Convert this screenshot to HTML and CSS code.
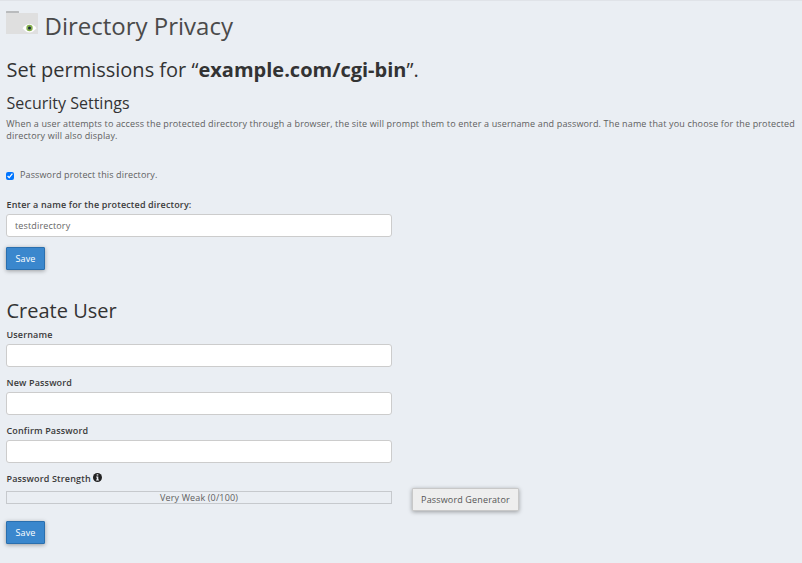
FILE: index.html
```html
<!DOCTYPE html>
<html lang="en">
	<head>
		<meta charset="UTF-8" />
		<meta name="viewport" content="initial-scale=1,width=device-width" />
		<title>Directory Privacy</title>
		<link rel="stylesheet" href="styles.css">
	</head>

	<body>
		<main class="content">
			<h1 class="page-header">
				<svg class="page-icon" width="32" height="24" viewBox="0 0 32 24">
					<path d="M0 .5a.5.5 0 0 1 .5-.5h12a.5.5 0 0 1 .5.5v3H0z" fill="#b9bbbd" />
					<path d="M0 2h31.500a.5.5 0 0 1 .5.5V23H0z" fill="#dfdfdf" />
					<path d="M16.500 17.200q7-8.400 14 0q-7 8.400-14 0z" fill="#fff" />
					<circle cx="23.500" cy="17" r="3.200" fill="#86b04f" />
					<circle cx="23.500" cy="17" r="1.500" fill="#1c2b3a" />
				</svg>
				<span class="page-title">Directory Privacy</span>
			</h1>
			<h2 class="section-title">Set permissions for “<strong>example.com/cgi-bin</strong>”.</h2>

			<form class="security-form">
				<h3 class="section-subtitle">Security Settings</h3>
				<p class="description">When a user attempts to access the protected directory through a browser, the site will prompt them to enter a username and password. The name that you choose for the protected directory will also display.</p>
				<label class="checkbox">
					<input class="checkbox-input" type="checkbox" checked />
					<span class="checkbox-text">Password protect this directory.</span>
				</label>
				<div class="form-group">
					<label class="form-label" for="name">Enter a name for the protected directory:</label>
					<input class="form-control" id="name" type="text" value="testdirectory" />
				</div>
				<button class="btn btn-primary" type="button">Save</button>
			</form>

			<form class="user-form">
				<h2 class="section-title section-title_user">Create User</h2>
				<div class="form-group">
					<label class="form-label" for="username">Username</label>
					<input class="form-control" id="username" type="text" />
				</div>
				<div class="form-group">
					<label class="form-label" for="password">New Password</label>
					<input class="form-control" id="password" type="password" />
				</div>
				<div class="form-group">
					<label class="form-label" for="confirm">Confirm Password</label>
					<input class="form-control" id="confirm" type="password" />
				</div>
				<div class="strength-row">
					<div class="strength">
						<div class="form-label strength-label">
							<span>Password Strength</span>
							<svg class="info-icon" width="9" height="9" viewBox="0 0 9 9">
								<circle cx="4.500" cy="4.500" r="4.500" fill="#222" />
								<path d="M3.700 1.300h1.600v1.300H3.700zM3.200 3.500h2.100v2.900h.6v1H3.100v-1h.7V4.400h-.6z" fill="#eaeef3" />
							</svg>
						</div>
						<div class="strength-bar">Very Weak (0/100)</div>
					</div>
					<button class="btn btn-default" type="button">Password Generator</button>
				</div>
				<button class="btn btn-primary" type="button">Save</button>
			</form>
		</main>
	</body>
</html>
```

FILE: styles.css
```css
html {
	box-sizing: border-box;
}

*,
*::after,
*::before {
	box-sizing: inherit;
}

body {
	margin: 0;
	min-height: 100vh;
	border-top: 1px solid #e0e3e8;
	background-color: #eaeef3;
	font-family: "Open Sans", sans-serif;
	font-size: 9px;
	line-height: 12px;
	letter-spacing: 0.15px;
	color: #606060;
}

h1,
h2,
h3,
p {
	margin: 0;
	font-weight: 400;
}

h1,
h2,
h3 {
	letter-spacing: 0;
}

.content {
	padding: 10px 6px 0;
}

.page-header {
	display: flex;
	align-items: flex-start;
	gap: 6.5px;
	height: 44px;
	color: #4a4a4a;
}

.page-title {
	font-size: 24px;
	line-height: 29px;
}

.section-title {
	height: 37px;
	padding-left: 0.5px;
	font-size: 20px;
	line-height: 30px;
	color: #333;
}

.section-title strong {
	font-weight: 700;
}

.section-subtitle {
	height: 26px;
	padding-left: 0.5px;
	font-size: 16px;
	line-height: 22px;
	color: #333;
}

.description {
	height: 51px;
	padding-left: 0.3px;
	margin-right: -4px;
}

.checkbox {
	display: flex;
	align-items: center;
	gap: 6px;
	height: 12px;
	margin-bottom: 18px;
	letter-spacing: 0.13px;
}

.checkbox-input {
	width: 8px;
	height: 8px;
	margin: 2px 0 0;
}

.form-group {
	display: flex;
	flex-direction: column;
	align-items: flex-start;
	width: 386px;
	margin-bottom: 10px;
}

.form-label {
	height: 15px;
	padding-left: 0.5px;
	font-weight: 600;
	color: #3a3a3a;
}

.form-control {
	width: 100%;
	height: 23px;
	padding: 0 8px;
	border: 1px solid #ccc;
	border-radius: 3px;
	background-color: white;
	font-family: inherit;
	font-size: inherit;
	letter-spacing: inherit;
	color: #666;
}

.btn {
	height: 23px;
	padding: 0;
	border: 1px solid;
	border-radius: 1px;
	font-family: inherit;
	font-size: inherit;
	line-height: 12px;
	letter-spacing: inherit;
	box-shadow: 0 1px 4px rgb(0 0 0 / 35%);
}

.btn-primary {
	display: block;
	width: 39px;
	border-color: #2a6fae;
	background-color: #3a87cd;
	font-weight: 500;
	letter-spacing: 0.1px;
	color: white;
}

.btn-default {
	width: 107px;
	border-color: #c8c8c8;
	background-color: #eee;
	color: #555;
}

.user-form {
	margin-top: 26px;
}

.section-title_user {
	height: 33px;
}

.strength-row {
	display: flex;
	align-items: flex-end;
	gap: 20px;
	height: 38px;
	margin-bottom: 10px;
}

.strength {
	width: 386px;
	height: 38px;
}

.strength-label {
	display: flex;
	gap: 2px;
	height: 18px;
}

.strength-bar {
	height: 13px;
	border: 1px solid #c6c9cd;
	line-height: 12px;
	text-align: center;
}
```
